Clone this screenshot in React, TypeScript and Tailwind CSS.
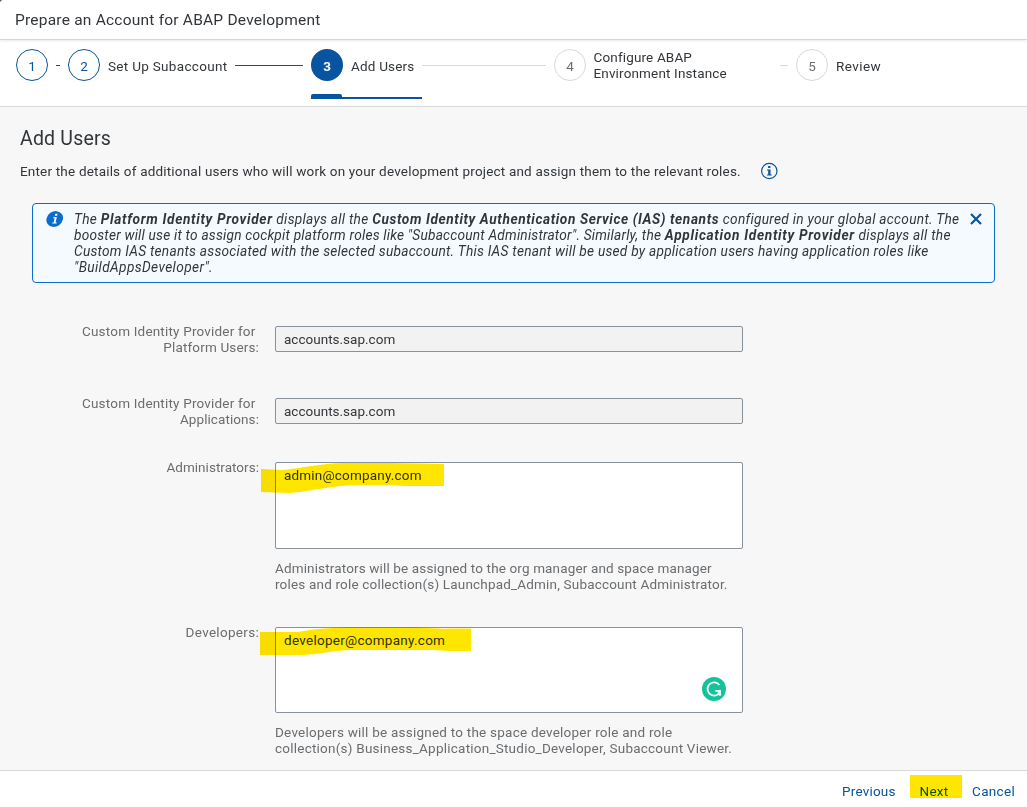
import React from "react";

function StepCircle({ n, state }: { n: number; state: "done" | "active" | "todo" }) {
  const look = {
    done: "border border-[#0854a0] text-[#0854a0] bg-white",
    active: "bg-[#0854a0] text-white font-bold",
    todo: "border border-[#d9d9d9] text-[#6a6d70] bg-white",
  }[state];
  return (
    <span className={`flex size-8 shrink-0 items-center justify-center rounded-full pt-0.5 text-[13.5px] tracking-normal ${look}`}>
      {n}
    </span>
  );
}

function Field({ label, children }: { label: React.ReactNode; children: React.ReactNode }) {
  return (
    <div className="flex">
      <label className="w-[259px] shrink-0 text-right text-[#6a6d70]">{label}</label>
      <div className="ml-4 w-[468px]">{children}</div>
    </div>
  );
}

function ReadOnlyInput({ value }: { value: string }) {
  return (
    <div className="mt-[3px] flex h-[26px] items-center rounded-[2px] border border-[#89919a] bg-[#f2f2f2] px-2 tracking-[0.01px]">
      {value}
    </div>
  );
}

export default function App() {
  return (
    <div className="flex h-[807px] w-[1027px] flex-col overflow-hidden bg-[#444] font-['Roboto','Liberation_Sans',sans-serif] text-[13.5px] leading-4 tracking-[0.19px] whitespace-nowrap text-[#32363a]">
      <header className="relative z-10 flex h-10 shrink-0 items-center rounded-tl-[3px] border-b border-[#d5d7d9] bg-white pl-[15px] text-[15.5px] tracking-[0.22px] shadow-[0_1px_3px_rgba(0,0,0,0.09)]">
        <h1 className="pt-px">Prepare an Account for ABAP Development</h1>
      </header>

      <nav className="flex h-[67px] shrink-0 border-b border-[#d9d9d9] bg-white pt-[9px] pl-4">
        <div className="flex h-8 items-center">
          <StepCircle n={1} state="done" />
          <span className="mx-2 h-px w-1 bg-[#0854a0]" />
          <StepCircle n={2} state="done" />
          <span className="ml-2 w-[119px] pt-0.5 tracking-[0.31px]">Set Up Subaccount</span>
          <span className="mx-2 h-px w-[68px] bg-[#0854a0]" />
        </div>
        <div className="flex w-[111px] flex-col">
          <div className="flex h-8 items-center">
            <StepCircle n={3} state="active" />
            <span className="ml-2 pt-0.5">Add Users</span>
          </div>
          <div className="mt-[13px] h-[3px] w-[31px] rounded-t-[2px] bg-[#0854a0]" />
          <div className="h-[2px] w-full bg-[#0854a0]" />
        </div>
        <div className="flex h-8 items-center">
          <span className="mr-2 h-px w-[124px] bg-[#d9d9d9]" />
          <StepCircle n={4} state="todo" />
          <span className="ml-[7.5px] w-[178.5px] tracking-[0.15px]">
            Configure ABAP
            <br />
            Environment Instance
          </span>
          <span className="mr-2 ml-2 h-px w-2 bg-[#d9d9d9]" />
          <StepCircle n={5} state="todo" />
          <span className="ml-2 pt-0.5 tracking-[0.45px]">Review</span>
        </div>
      </nav>

      <main className="h-[663px] shrink-0 bg-[#f7f7f7] pt-5">
        <h2 className="pl-5 text-[19.5px] leading-6 tracking-[0.2px]">Add Users</h2>
        <div className="mt-[10px] flex h-5 items-center pl-5">
          <p className="w-[740px]">
            Enter the details of additional users who will work on your development project and assign them to the relevant roles.
          </p>
          <svg className="size-[18px]" viewBox="0 0 18 18">
            <circle cx="9.3" cy="9" r="7.7" fill="none" stroke="#0854a0" strokeWidth="1.2" />
            <path d="M8.1 4h2.3v2H8.1zM7 7.4h3.5v5h1.2v1.1H7v-1.1h1.2V8.5H7z" fill="#0854a0" />
          </svg>
        </div>

        <section className="mt-[22px] ml-8 flex h-20 w-[963px] rounded-[4px] border border-[#0a6ed1] bg-[#f5faff] pt-[7px] pl-[13px]">
          <svg className="h-4 w-[18px]" viewBox="0 0 18 16">
            <ellipse cx="8.7" cy="8" rx="8.7" ry="7.5" transform="rotate(-35 8.7 8)" fill="#0a6ed1" />
            <path d="M9.4 2.8h2.2l-.5 2H8.9zM7.6 6h3.2l-1.2 5.4h1.2l-.3 1.2H6.2l.3-1.2h1.2l.9-4.2H7.3z" fill="#fff" />
          </svg>
          <p className="ml-[10px] w-[893px] text-[13.7px] tracking-[0.285px] italic">
            The <b className="tracking-[0.67px]">Platform Identity Provider</b> displays all the <b className="tracking-[0.595px]">Custom Identity Authentication Service (IAS) tenants</b> configured in your global account. The
            <br />
            <span className="tracking-[0.22px]">booster will use it to assign cockpit platform roles like "Subaccount Administrator". Similarly, the </span><b className="tracking-[0.7px]">Application Identity Provider</b> displays all the
            <br />
            <span className="tracking-[0.25px]">Custom IAS tenants associated with the selected subaccount. This IAS tenant will be used by application users having application roles like</span>
            <br />
            <span className="tracking-[0.38px]">"BuildAppsDeveloper".</span>
          </p>
          <svg className="mt-[2px] ml-[3px] size-3" viewBox="0 0 12 12">
            <path d="M1 1l10 10M11 1L1 11" stroke="#0854a0" strokeWidth="2.2" />
          </svg>
        </section>

        <form className="mt-10">
          <div className="h-[72px]">
            <Field label={<><span className="mr-[3.5px]">Custom Identity Provider for</span><br /><span className="tracking-[0.15px]">Platform Users:</span></>}>
              <ReadOnlyInput value="accounts.sap.com" />
            </Field>
          </div>
          <div className="h-16">
            <Field label={<><span className="mr-[3.5px]">Custom Identity Provider for</span><br /><span className="tracking-[0.08px]">Applications:</span></>}>
              <ReadOnlyInput value="accounts.sap.com" />
            </Field>
          </div>
          <div className="h-[165px]">
            <Field label={<span className="tracking-[0.03px]">Administrators:</span>}>
              <div className="relative mt-[3px] h-[87px] rounded-[2px] border border-[#89919a] bg-white px-2 pt-1">
                admin@company.com
                <svg className="absolute -top-px -left-[16px] h-[34px] w-[185px] mix-blend-multiply" viewBox="0 0 185 34">
                  <path d="M1 7L22 8C42 6 60 1.5 84 1H132L184 2V24H144L132 23H103C70 23 50 30 29 31L1 30Z" fill="#ffe600" />
                </svg>
              </div>
              <p className="mt-[11px] tracking-[0.14px] text-[#6a6d70]">
                Administrators will be assigned to the org manager and space manager
                <br />
                <span className="tracking-[0.18px]">roles and role collection(s) Launchpad_Admin, Subaccount Administrator.</span>
              </p>
            </Field>
          </div>
          <Field label={<span className="tracking-[0.3px]">Developers:</span>}>
            <div className="relative mt-[3px] h-[86px] rounded-[2px] border border-[#89919a] bg-white px-2 pt-1 tracking-[0.27px]">
              developer@company.com
              <svg className="absolute -top-px -left-[17px] h-[34px] w-[212px] mix-blend-multiply" viewBox="0 0 212 34">
                <path d="M1 5H39C54 2 70 1 86 .5H160Q180 2 192 1.5H212V24H190L174 23H90C70 24 57 28 43 28H1Z" fill="#ffe600" />
              </svg>
              <svg className="absolute right-4 bottom-[11px] size-6" viewBox="0 0 24 24">
                <circle cx="12" cy="12" r="12" fill="#15c39a" />
                <path d="M17.4 8A6.6 6.6 0 1 0 16.7 16.8M13.3 13.9H18V18.7M18 14.2L15.7 17" fill="none" stroke="#fff" strokeWidth="1.8" />
              </svg>
            </div>
            <p className="mt-[11px] tracking-[0.23px] text-[#6a6d70]">
              Developers will be assigned to the space developer role and role
              <br />
              collection(s) Business_Application_Studio_Developer, Subaccount Viewer.
            </p>
          </Field>
        </form>
      </main>

      <footer className="flex grow items-start justify-end border-t border-[#d9d9d9] bg-white pt-1 pr-3 text-[#0854a0]">
        <button className="mt-2 mr-[14px]">Previous</button>
        <span className="mr-[10px] h-[23px] w-[52.5px] bg-[#ffe600] pt-2 pl-[10px] text-[#085400]">Next</span>
        <button className="mt-2 tracking-[0.3px]">Cancel</button>
      </footer>
    </div>
  );
}
